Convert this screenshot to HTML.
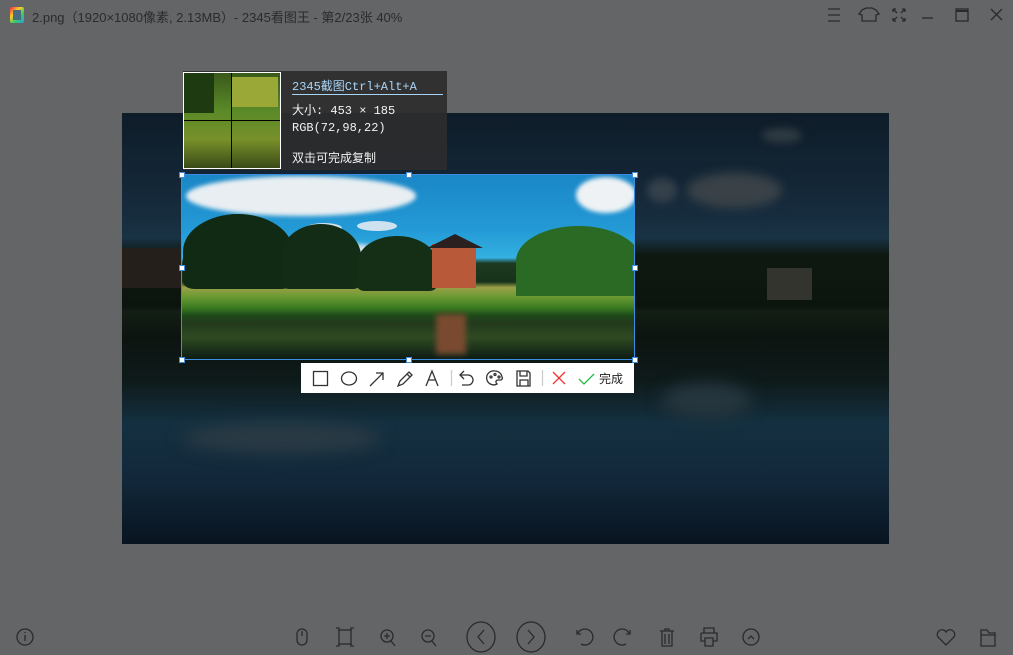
<!DOCTYPE html><html><head><meta charset="utf-8"><style>
body{margin:0;width:1013px;height:655px;background:#646567;position:relative;overflow:hidden;font-family:"Liberation Sans","Noto Sans CJK SC",sans-serif}
.a{position:absolute}
svg{position:absolute;overflow:visible}
.ic{stroke:#2a2a2a;fill:none;stroke-width:1.3}
.tb{stroke:#333;fill:none;stroke-width:1.3}
.h{position:absolute;width:4px;height:4px;background:#fff;border:1px solid #3d8ee0}
.info{color:#f2f2f2;font-family:"Liberation Mono","Noto Sans CJK SC",monospace;font-size:12px;position:absolute;left:292px;white-space:nowrap}
</style></head><body>
<div class="a" style="left:10px;top:7px;width:14px;height:16px;background:linear-gradient(135deg,#e25 0,#fc2 35%,#3c6 65%,#39e 100%);border-radius:2px"></div>
<div class="a" style="left:13px;top:10px;width:8px;height:10px;background:#4a6a80"></div>
<div class="a" style="left:32px;top:7px;font-size:13px;color:#2b2b2b;white-space:nowrap">2.png（1920×1080像素, 2.13MB）- 2345看图王 - 第2/23张 40%</div>
<svg class="ic" style="left:0;top:0" width="1013" height="30">
<path d="M828 9h12M828 15h12M828 21h12"/>
<path d="M862 10l4-2h6l4 2 3 4-3 1v6h-14v-6l-3-1z"/>
<path d="M893 9l4 4M905 9l-4 4M893 21l4-4M905 21l-4-4M893 9h3M893 9v3M905 9h-3M905 9v3M893 21h3M893 21v-3M905 21h-3M905 21v-3"/>
<path d="M922 18h11"/>
<rect x="956" y="9" width="12" height="12"/><path d="M956 11h12" stroke-width="2"/>
<path d="M991 9l11 11M1002 9l-11 11"/>
</svg>
<!-- dimmed image -->
<div class="a" style="left:122px;top:113px;width:767px;height:431px;background:linear-gradient(180deg,#0e1c28 0%,#15293a 20%,#193244 29%,#0e1810 33%,#0c140e 45%,#131e14 46%,#0c1410 52%,#0e1a1a 62%,#143040 72%,#12283a 85%,#081420 100%);overflow:hidden">
 <div class="a" style="left:565px;top:60px;width:95px;height:35px;background:#3a4248;border-radius:50%;filter:blur(5px)"></div>
 <div class="a" style="left:640px;top:15px;width:40px;height:15px;background:#2e3a42;border-radius:50%;filter:blur(4px)"></div>
 <div class="a" style="left:525px;top:65px;width:30px;height:25px;background:#34404a;border-radius:50%;filter:blur(4px)"></div>
 <div class="a" style="left:60px;top:310px;width:200px;height:30px;background:#2a3a44;border-radius:50%;filter:blur(8px)"></div>
 <div class="a" style="left:540px;top:270px;width:90px;height:35px;background:#26363e;border-radius:50%;filter:blur(8px)"></div>
 <div class="a" style="left:0;top:135px;width:60px;height:40px;background:#241f1a"></div>
 <div class="a" style="left:645px;top:155px;width:45px;height:32px;background:#34342e"></div>
</div>
<!-- selection -->
<div class="a" style="left:181px;top:174px;width:454px;height:186px;overflow:hidden;background:linear-gradient(180deg,#1a86c6 0%,#239ad6 30%,#34b0e0 45%,#1e3a20 48%,#16321a 58%,#9aa048 61%,#6a9a32 66%,#3a7a22 72%,#1e4a1a 76%,#223a1c 80%,#2e4a22 88%,#0c1a14 100%)">
 <div class="a" style="left:5px;top:2px;width:230px;height:40px;background:#e8eef2;border-radius:50%;filter:blur(2px)"></div>
 <div class="a" style="left:395px;top:3px;width:60px;height:36px;background:#eef2f4;border-radius:50%;filter:blur(2px)"></div>
 <div class="a" style="left:125px;top:49px;width:36px;height:10px;background:#cde2ee;border-radius:50%"></div>
 <div class="a" style="left:176px;top:47px;width:40px;height:10px;background:#cde2ee;border-radius:50%"></div>
 <div class="a" style="left:150px;top:70px;width:50px;height:20px;background:#d8e6ee;border-radius:50%;filter:blur(2px)"></div>
 <div class="a" style="left:2px;top:40px;width:110px;height:75px;background:#112a14;border-radius:50% 50% 10% 10%"></div>
 <div class="a" style="left:100px;top:50px;width:80px;height:65px;background:#132c16;border-radius:50% 50% 10% 10%"></div>
 <div class="a" style="left:176px;top:62px;width:80px;height:55px;background:#152e16;border-radius:50% 50% 10% 10%"></div>
 <div class="a" style="left:335px;top:52px;width:125px;height:70px;background:#2a6a24;border-radius:60% 60% 0 0"></div>
 <div class="a" style="left:251px;top:70px;width:44px;height:44px;background:#b85a3a"></div>
 <div class="a" style="left:246px;top:60px;width:56px;height:14px;background:#2a2020;clip-path:polygon(50% 0,100% 100%,0 100%)"></div>
 <div class="a" style="left:255px;top:140px;width:30px;height:40px;background:#7a4a30;filter:blur(3px)"></div>
</div>
<div class="a" style="left:181px;top:174px;width:452px;height:184px;border:1px solid #3d8ee0"></div>
<div class="h" style="left:179px;top:172px"></div><div class="h" style="left:406px;top:172px"></div><div class="h" style="left:632px;top:172px"></div>
<div class="h" style="left:179px;top:265px"></div><div class="h" style="left:632px;top:265px"></div>
<div class="h" style="left:179px;top:357px"></div><div class="h" style="left:406px;top:357px"></div><div class="h" style="left:632px;top:357px"></div>
<!-- info -->
<div class="a" style="left:183px;top:71px;width:264px;height:99px;background:rgba(44,44,46,0.92)"></div>
<div class="a" style="left:183px;top:72px;width:96px;height:95px;border:1px solid #fff;background:linear-gradient(180deg,#3a5a1a,#5a8a28 40%,#78902a 70%,#3a4a18);overflow:hidden">
 <div class="a" style="left:48px;top:4px;width:46px;height:30px;background:#9aa838"></div>
 <div class="a" style="left:0;top:0;width:30px;height:40px;background:#1e3a10"></div>
 <div class="a" style="left:47px;top:0;width:1px;height:95px;background:#000"></div>
 <div class="a" style="left:0;top:47px;width:96px;height:1px;background:#000"></div>
</div>
<div class="info" style="top:77px;color:#a8d4f8">2345截图Ctrl+Alt+A</div>
<div class="a" style="left:292px;top:94px;width:151px;height:1px;background:#a8d4f8"></div>
<div class="info" style="top:101px">大小: 453 × 185</div>
<div class="info" style="top:121px">RGB(72,98,22)</div>
<div class="info" style="top:149px">双击可完成复制</div>
<!-- toolbar -->
<div class="a" style="left:301px;top:363px;width:333px;height:30px;background:#fff"></div>
<svg class="tb" style="left:0;top:0" width="1013" height="655">
<rect x="313.5" y="371.5" width="14" height="14"/>
<ellipse cx="349" cy="378.5" rx="7.5" ry="6.5"/>
<path d="M370 386l13-13M376 373h7v7"/>
<path d="M398 386l2-5 9-9 3 3-9 9zM407 374l3 3"/>
<path d="M426 386l6-15 6 15M428.5 380h7"/>
<path d="M451.5 370v16" stroke="#ccc"/>
<path d="M464 371l-4 4 4 4M460 375h8a5 5 0 0 1 0 10h-6"/>
<path d="M495 371a7 7 0 1 0 2 13c-2-2-1-4 1-4h3a2 2 0 0 0 1-3 7 7 0 0 0-7-6z"/><circle cx="491" cy="377" r="1"/><circle cx="495" cy="374.5" r="1"/><circle cx="499" cy="377" r="1"/>
<path d="M517 371h11l2 2v13h-13zM520 371v5h7v-5M520 386v-6h8v6"/>
<path d="M542.5 370v16" stroke="#ccc"/>
<path d="M553 372l12 12M565 372l-12 12" stroke="#e33"/>
<path d="M579 379l5 5 10-10" stroke="#2b4"/>
</svg>
<div class="a" style="left:599px;top:370px;font-size:12px;color:#222">完成</div>
<!-- bottom -->
<svg class="ic" style="left:0;top:0" width="1013" height="655">
<circle cx="25" cy="637" r="8"/><path d="M25 635v6M25 632v1"/>
<rect x="297" y="629" width="10" height="16" rx="5"/><path d="M302 631v5"/>
<rect x="339" y="630" width="12" height="14"/><path d="M336 628h3v3M354 628h-3v3M336 646h3v-3M354 646h-3v-3"/>
<circle cx="387" cy="636" r="6"/><path d="M391 641l4 5M384 636h6M387 633v6"/>
<circle cx="428" cy="636" r="6"/><path d="M432 641l4 5M425 636h6"/>
<ellipse cx="481" cy="637" rx="14" ry="15"/><path d="M484 630l-6 7 6 7"/>
<ellipse cx="531" cy="637" rx="14" ry="15"/><path d="M528 630l6 7-6 7"/>
<path d="M577 630v4h4M578 633a8 8 0 1 1 3 11"/>
<path d="M630 630v4h-4M629 633a8 8 0 1 0-3 11"/>
<path d="M660 631h14M665 631v-2h4v2M662 631v15h10v-15M665 634v10M669 634v10"/>
<path d="M704 633v-5h10v5M701 633h16v8h-4M705 641h-4v-8M705 638h8v8h-8z"/>
<circle cx="751" cy="637" r="8"/><path d="M748 639l3-3 3 3"/>
<path d="M946 645l-8-8a4.5 4.5 0 0 1 8-5 4.5 4.5 0 0 1 8 5z"/>
<path d="M981 630h6l2 3h6v13h-14zM981 635h14"/>
</svg>
</body></html>
